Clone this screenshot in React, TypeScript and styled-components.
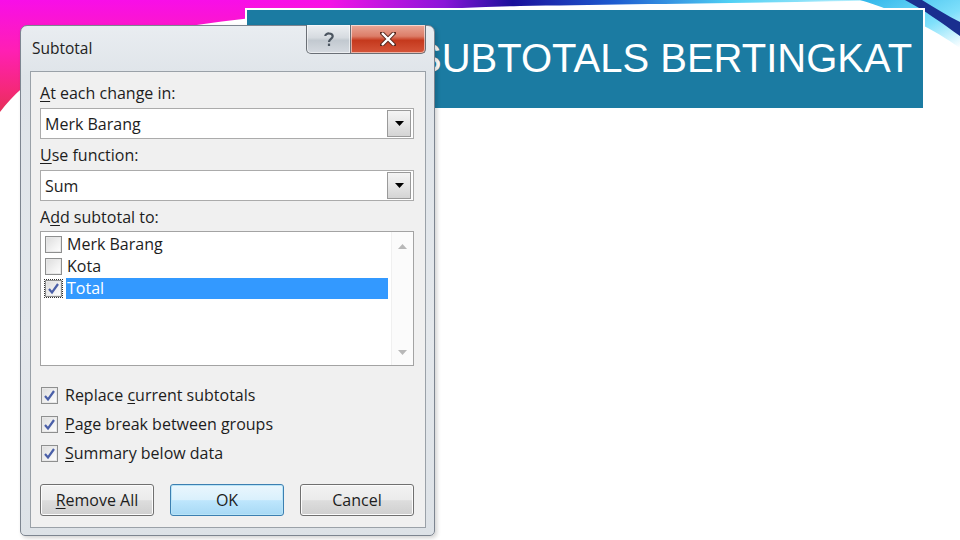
import React from 'react';
import styled, { createGlobalStyle, css } from 'styled-components';

const GlobalStyle = createGlobalStyle`
  html, body {
    margin: 0;
    padding: 0;
    background: #ffffff;
  }
  body {
    width: 960px;
    height: 540px;
    overflow: hidden;
  }
`;

const Slide = styled.div`
  width: 960px;
  height: 540px;
  display: grid;
  grid-template-columns: 960px;
  grid-template-rows: 540px;
  background: #ffffff;
  overflow: hidden;
`;

const Layer = styled.div`
  grid-area: 1 / 1;
  display: flex;
  align-items: flex-start;
`;

const WaveLayer = styled(Layer)`
  pointer-events: none;
`;

const TitleLayer = styled(Layer)`
  padding: 8px 0 0 245px;
`;

const DialogLayer = styled(Layer)`
  padding: 25px 0 0 20px;
`;

const TitleBox = styled.div`
  width: 676px;
  height: 98px;
  box-sizing: content-box;
  border: 2px solid #ffffff;
  background: #1b7ba2;
  display: flex;
  align-items: flex-start;
`;

const TitleText = styled.h1`
  margin: 0;
  padding: 26px 0 0 168px;
  font-family: 'Liberation Sans', Arial, sans-serif;
  font-weight: 400;
  font-size: 40px;
  line-height: 44px;
  color: #ffffff;
  white-space: nowrap;
`;

const Dialog = styled.div`
  width: 415px;
  height: 511px;
  border: 1px solid #7d8590;
  border-radius: 7px 7px 5px 5px;
  background: linear-gradient(180deg, #e9edf1 0%, #dfe4e9 10%, #e4e8ec 60%, #dde2e7 100%);
  box-shadow: 2px 2px 4px rgba(0, 0, 0, 0.18);
  display: flex;
  flex-direction: column;
  padding: 0 8px 7px 9px;
  box-sizing: border-box;
  font-family: 'Open Sans', 'Noto Sans', sans-serif;
  font-size: 16px;
  color: #1d1d1d;
`;

const TitleBar = styled.div`
  height: 45px;
  display: flex;
  align-items: flex-start;
  justify-content: space-between;
  flex-shrink: 0;
`;

const DialogTitle = styled.span`
  margin: 12px 0 0 2px;
  font-size: 15.5px;
  line-height: 20px;
  color: #222;
`;

const CaptionButtons = styled.div`
  display: flex;
  margin-top: -1px;
`;

const CaptionButton = styled.div<{ $close?: boolean }>`
  height: 28px;
  display: flex;
  align-items: center;
  justify-content: center;
  border: 1px solid #6a6f76;
  border-top: none;
  box-shadow: inset 0 0 0 1px rgba(255, 255, 255, 0.55);
  ${({ $close }) =>
    $close
      ? css`
          width: 74px;
          border-left: none;
          border-radius: 0 0 5px 0;
          background: linear-gradient(180deg, #e9a898 0%, #dc7d68 40%, #c5391d 55%, #d5553a 100%);
        `
      : css`
          width: 43px;
          border-radius: 0 0 0 5px;
          background: linear-gradient(180deg, #eceff2 0%, #d6dbe0 45%, #c2c9d0 55%, #d5dae0 100%);
        `}
`;

const Client = styled.div`
  flex: 1;
  border: 1px solid #9aa1a8;
  background: #f0f0f0;
  display: flex;
  flex-direction: column;
  padding: 0 11px 0 9px;
`;

const Label = styled.div<{ $top: number }>`
  margin-top: ${({ $top }) => $top}px;
  height: 20px;
  line-height: 20px;
  white-space: nowrap;
`;

const Key = styled.span`
  text-decoration: underline;
  text-underline-offset: 2px;
`;

const Combo = styled.div<{ $top: number }>`
  margin-top: ${({ $top }) => $top}px;
  height: 31px;
  box-sizing: border-box;
  border: 1px solid #ababab;
  background: #ffffff;
  display: flex;
  align-items: center;
  padding: 0 2px 0 4px;
`;

const ComboText = styled.span`
  flex: 1;
  line-height: 20px;
`;

const DropButton = styled.div`
  width: 22px;
  height: 25px;
  border: 1px solid #9a9a9a;
  background: linear-gradient(180deg, #f4f4f4 0%, #e6e6e6 50%, #d4d4d4 100%);
  display: flex;
  align-items: center;
  justify-content: center;
`;

const ListBox = styled.div`
  margin-top: 4px;
  height: 135px;
  box-sizing: border-box;
  border: 1px solid #a3a3a3;
  background: #ffffff;
  display: flex;
`;

const ListItems = styled.div`
  flex: 1;
  padding: 1px 0 0 3px;
  display: flex;
  flex-direction: column;
`;

const ListRow = styled.div`
  height: 22px;
  display: flex;
  align-items: center;
  gap: 3px;
`;

const RowText = styled.span<{ $selected?: boolean }>`
  flex: 1;
  height: 21px;
  line-height: 21px;
  padding-left: 1px;
  margin-right: 3px;
  ${({ $selected }) =>
    $selected &&
    css`
      background: #3399ff;
      color: #ffffff;
    `}
`;

const ScrollBar = styled.div`
  width: 21px;
  background: #fbfbfb;
  border-left: 1px solid #f0f0f0;
  display: flex;
  flex-direction: column;
  justify-content: space-between;
  align-items: center;
  padding: 12px 0 10px;
`;

const BoxWrap = styled.div<{ $focus?: boolean }>`
  display: flex;
  padding: 1px;
  outline: ${({ $focus }) => ($focus ? '1px dotted #333' : 'none')};
  outline-offset: -1px;
`;

const Box = styled.div`
  width: 15px;
  height: 15px;
  border: 1px solid #8e8f8f;
  background: linear-gradient(135deg, #dcdcdc 0%, #f2f2f2 60%, #ffffff 100%);
  box-shadow: inset 0 0 0 1px #e8e8e8;
  display: flex;
  align-items: center;
  justify-content: center;
`;

const Options = styled.div`
  margin-top: 19px;
  display: flex;
  flex-direction: column;
  gap: 9px;
`;

const OptionRow = styled.div`
  height: 20px;
  display: flex;
  align-items: center;
  gap: 6px;
  white-space: nowrap;
`;

const ButtonRow = styled.div`
  margin-top: 21px;
  display: flex;
  gap: 16px;
`;

const PushButton = styled.div<{ $default?: boolean }>`
  width: 114px;
  height: 32px;
  box-sizing: border-box;
  border-radius: 3px;
  display: flex;
  align-items: center;
  justify-content: center;
  ${({ $default }) =>
    $default
      ? css`
          border: 1px solid #3c7fb1;
          background: linear-gradient(180deg, #eaf6fd 0%, #d9f0fc 50%, #bee6fd 52%, #a7d9f5 100%);
          box-shadow: inset 0 0 0 1px #b9e4f7;
        `
      : css`
          border: 1px solid #707070;
          background: linear-gradient(180deg, #f2f2f2 0%, #ebebeb 50%, #dddddd 52%, #cfcfcf 100%);
          box-shadow: inset 0 0 0 1px #fcfcfc;
        `}
`;

const Check = () => (
  <svg width="13" height="13" viewBox="0 0 13 13">
    <path d="M2 7 L5 10.5 L11 2" fill="none" stroke="#4a5fa8" strokeWidth="2.2" />
  </svg>
);

const CheckBox = ({ checked, focus }: { checked?: boolean; focus?: boolean }) => (
  <BoxWrap $focus={focus}>
    <Box>{checked && <Check />}</Box>
  </BoxWrap>
);

const Arrow = ({ up, color = '#000' }: { up?: boolean; color?: string }) => (
  <svg width="9" height="5" viewBox="0 0 9 5">
    <path d={up ? 'M0 5 L4.5 0 L9 5 Z' : 'M0 0 L9 0 L4.5 5 Z'} fill={color} />
  </svg>
);

const Wave = () => (
  <svg width="960" height="120" viewBox="0 0 960 120">
    <defs>
      <linearGradient id="pink" x1="0" y1="0" x2="0" y2="1">
        <stop offset="0" stopColor="#f80ee8" />
        <stop offset="0.45" stopColor="#ff1fb4" />
        <stop offset="0.8" stopColor="#f5287a" />
        <stop offset="1" stopColor="#e43058" />
      </linearGradient>
      <linearGradient id="band" x1="0" y1="0" x2="1" y2="0">
        <stop offset="0" stopColor="#f214e6" />
        <stop offset="0.2" stopColor="#8a16d8" />
        <stop offset="0.32" stopColor="#1a0f9a" />
        <stop offset="0.5" stopColor="#1d5cd0" />
        <stop offset="0.7" stopColor="#4fd0f4" />
        <stop offset="1" stopColor="#d8f8ff" />
      </linearGradient>
      <linearGradient id="corner" x1="0" y1="0" x2="1" y2="1">
        <stop offset="0" stopColor="#2fb6ea" />
        <stop offset="0.6" stopColor="#7fe0fb" />
        <stop offset="1" stopColor="#ffffff" />
      </linearGradient>
    </defs>
    <path d="M0 0 H470 C 400 4 330 9 270 16 C 170 26 90 42 50 66 C 30 80 12 96 0 112 Z" fill="url(#pink)" />
    <path d="M330 0 H900 C 760 3 620 4 520 6 C 450 8 390 11 330 14 Z" fill="url(#band)" />
    <path d="M860 0 H960 V48 C 935 30 900 12 860 0 Z" fill="url(#corner)" />
    <path d="M905 0 H922 C 935 8 948 16 960 22 V36 C 942 23 924 10 905 0 Z" fill="#1a2f8f" />
  </svg>
);

export default function App() {
  return (
    <Slide>
      <GlobalStyle />
      <WaveLayer>
        <Wave />
      </WaveLayer>
      <TitleLayer>
        <TitleBox>
          <TitleText>SUBTOTALS BERTINGKAT</TitleText>
        </TitleBox>
      </TitleLayer>
      <DialogLayer>
        <Dialog>
          <TitleBar>
            <DialogTitle>Subtotal</DialogTitle>
            <CaptionButtons>
              <CaptionButton>
                <svg width="12" height="17" viewBox="0 0 12 17">
                  <path
                    d="M2.3 5 C 2.3 1.6 9.7 1.6 9.7 5.2 C 9.7 7.8 6 8 6 11"
                    fill="none"
                    stroke="#4b5560"
                    strokeWidth="2.2"
                  />
                  <rect x="4.9" y="12.6" width="2.2" height="2.4" fill="#4b5560" />
                </svg>
              </CaptionButton>
              <CaptionButton $close>
                <svg width="16" height="14" viewBox="0 0 16 14">
                  <path
                    d="M2 1 L14 13 M14 1 L2 13"
                    stroke="#5a2a20"
                    strokeWidth="4.2"
                    strokeLinecap="square"
                  />
                  <path d="M2 1 L14 13 M14 1 L2 13" stroke="#ffffff" strokeWidth="2.4" />
                </svg>
              </CaptionButton>
            </CaptionButtons>
          </TitleBar>
          <Client>
            <Label $top={11}>
              <Key>A</Key>t each change in:
            </Label>
            <Combo $top={5}>
              <ComboText>Merk Barang</ComboText>
              <DropButton>
                <Arrow />
              </DropButton>
            </Combo>
            <Label $top={6}>
              <Key>U</Key>se function:
            </Label>
            <Combo $top={5}>
              <ComboText>Sum</ComboText>
              <DropButton>
                <Arrow />
              </DropButton>
            </Combo>
            <Label $top={6}>
              A<Key>d</Key>d subtotal to:
            </Label>
            <ListBox>
              <ListItems>
                <ListRow>
                  <CheckBox />
                  <RowText>Merk Barang</RowText>
                </ListRow>
                <ListRow>
                  <CheckBox />
                  <RowText>Kota</RowText>
                </ListRow>
                <ListRow>
                  <CheckBox checked focus />
                  <RowText $selected>Total</RowText>
                </ListRow>
              </ListItems>
              <ScrollBar>
                <Arrow up color="#b8b8b8" />
                <Arrow color="#b8b8b8" />
              </ScrollBar>
            </ListBox>
            <Options>
              <OptionRow>
                <CheckBox checked />
                <span>
                  Replace <Key>c</Key>urrent subtotals
                </span>
              </OptionRow>
              <OptionRow>
                <CheckBox checked />
                <span>
                  <Key>P</Key>age break between groups
                </span>
              </OptionRow>
              <OptionRow>
                <CheckBox checked />
                <span>
                  <Key>S</Key>ummary below data
                </span>
              </OptionRow>
            </Options>
            <ButtonRow>
              <PushButton>
                <span>
                  <Key>R</Key>emove All
                </span>
              </PushButton>
              <PushButton $default>OK</PushButton>
              <PushButton>Cancel</PushButton>
            </ButtonRow>
          </Client>
        </Dialog>
      </DialogLayer>
    </Slide>
  );
}
